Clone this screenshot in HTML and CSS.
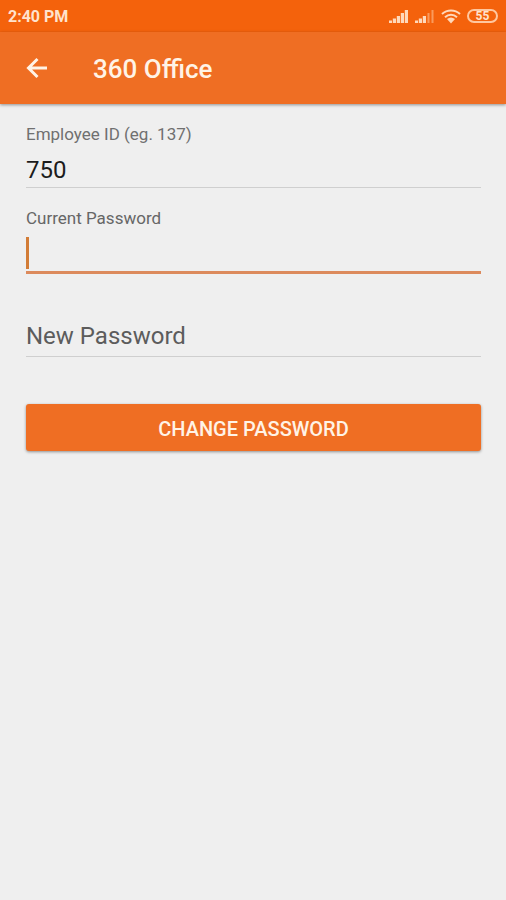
FILE: index.html
```html
<!DOCTYPE html>
<html lang="en">
<head>
<meta charset="utf-8">
<meta name="viewport" content="width=device-width, initial-scale=1">
<title>360 Office</title>
<link rel="stylesheet" href="styles.css">
</head>
<body>
<div class="status-bar">
  <span class="time">2:40 PM</span>
  <div class="status-icons">
    <svg width="20" height="16" viewBox="0 0 20 16" aria-hidden="true">
      <path d="M0 12.500h3V15H0zM3.800 10.500h3.200V15H3.800zM7.800 8h3.200v7H7.800zM11.800 5h3.200v10h-3.200zM15.800 2h3.200v13h-3.200z"/>
    </svg>
    <svg width="20" height="16" viewBox="0 0 20 16" aria-hidden="true">
      <path d="M0 12.500h3V15H0zM3.800 10.500h3.200V15H3.800zM7.800 8h3.200v7H7.800z"/>
      <path class="dim" d="M12.500 5h2v10h-2zM16.500 2h2v13h-2z"/>
    </svg>
    <svg width="20" height="16" viewBox="0 0 20 16" aria-hidden="true">
      <path class="wave" d="M1 6C6 1.200 14 1.200 19 6M4 9.200C7.500 6 12.500 6 16 9.200"/>
      <path d="M6 11Q10 8 14 11L10 15.500z"/>
    </svg>
    <span class="battery">55</span>
  </div>
</div>
<header class="app-bar">
  <button class="back" type="button" aria-label="Back">
    <svg width="22" height="22" viewBox="0 0 22 22" aria-hidden="true">
      <path d="M21 11H3M11.500 2L2.500 11L11.500 20"/>
    </svg>
  </button>
  <h1>360 Office</h1>
</header>
<main>
  <form>
    <div class="field">
      <label for="employee">Employee ID (eg. 137)</label>
      <input id="employee" type="text" inputmode="numeric" value="750">
    </div>
    <div class="field active">
      <label for="current">Current Password</label>
      <input id="current" type="password">
      <span class="caret"></span>
    </div>
    <div class="field empty">
      <input id="new" type="password" placeholder="New Password" aria-label="New Password">
    </div>
    <button class="submit" type="button">CHANGE PASSWORD</button>
  </form>
</main>
</body>
</html>
```
FILE: styles.css
```css
* {
  box-sizing: border-box;
}

body {
  margin: 0;
  min-height: 100vh;
  background: #efefef;
  font-family: Roboto, "Liberation Sans", sans-serif;
}

button,
input {
  font-family: inherit;
}

.status-bar {
  display: flex;
  align-items: center;
  justify-content: space-between;
  height: 32px;
  padding: 0 8px;
  background: #f4620c;
  color: #ffe3cd;
}

.time {
  font-size: 16px;
  font-weight: 700;
}

.status-icons {
  display: flex;
  align-items: center;
  gap: 6px;
}

.status-icons svg {
  fill: #ffd9bb;
}

.status-icons .dim {
  fill: #fa9a5c;
}

.status-icons .wave {
  fill: none;
  stroke: #ffd9bb;
  stroke-width: 2;
}

.battery {
  width: 31px;
  height: 14px;
  border: 2px solid #ffc79f;
  border-radius: 7px;
  font-size: 12px;
  font-weight: 700;
  line-height: 10px;
  text-align: center;
}

.app-bar {
  display: flex;
  align-items: center;
  gap: 45px;
  height: 72px;
  padding: 0 26px;
  background: #ef6e23;
  box-shadow: 0 1px 3px rgba(0, 0, 0, 0.4);
  color: #fff3e6;
}

.back {
  display: flex;
  padding: 0;
  border: 0;
  background: none;
}

.back svg {
  fill: none;
  stroke: #fff3e6;
  stroke-width: 3;
}

h1 {
  margin: 0;
  padding-top: 2px;
  font-size: 26px;
  font-weight: 500;
  line-height: 32px;
}

main {
  padding: 20px 25px 20px 26px;
}

.field {
  position: relative;
  margin-bottom: 20px;
}

label {
  display: block;
  color: #707070;
  font-size: 17px;
  line-height: 20px;
}

input {
  display: block;
  width: 100%;
  height: 44px;
  padding: 9px 0 0;
  border: 0;
  border-bottom: 1px solid #cfcfcf;
  border-radius: 0;
  outline: 0;
  background: transparent;
  color: #1c1c1c;
  font-size: 24px;
}

input::placeholder {
  color: #5c5c5c;
  opacity: 1;
}

.active label {
  color: #666;
}

.active input {
  height: 46px;
  border-bottom: 3px solid #dc8a5c;
}

.caret {
  position: absolute;
  left: 0;
  bottom: 5px;
  width: 3px;
  height: 32px;
  background: #d27c36;
}

.empty {
  margin: 39px 0 47px;
}

.empty input {
  padding: 6px 0 3px;
}

.submit {
  display: block;
  width: 100%;
  height: 47px;
  padding: 2px 0 0;
  border: 0;
  border-radius: 3px;
  background: #ef6e23;
  box-shadow: 0 1px 3px rgba(0, 0, 0, 0.4);
  color: #fff3e6;
  font-size: 20px;
  font-weight: 500;
}
```
